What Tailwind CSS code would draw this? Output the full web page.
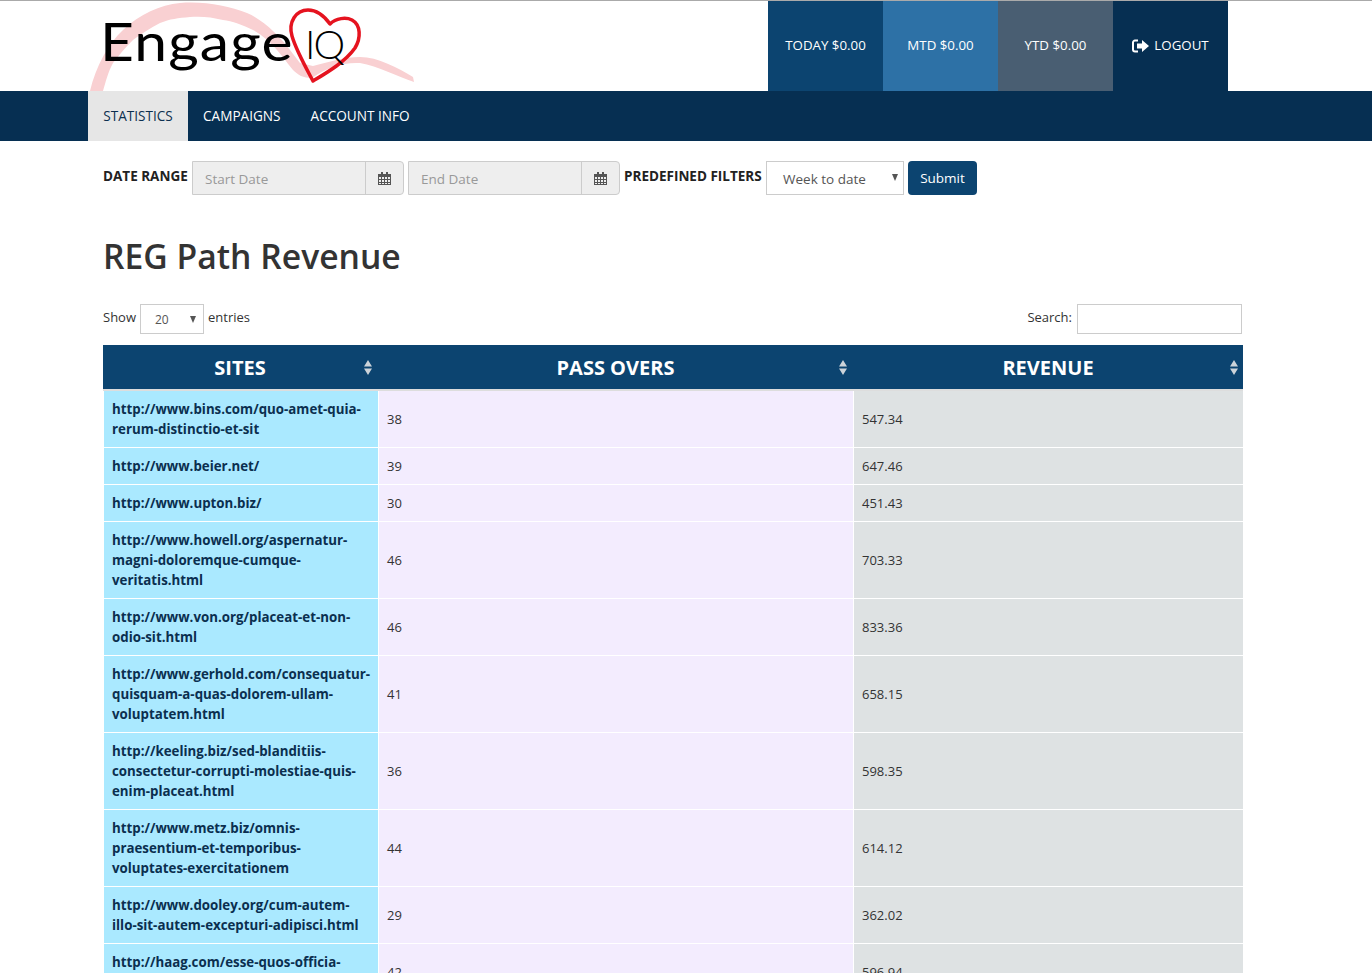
<!DOCTYPE html>
<html lang="en">
<head>
    <meta charset="UTF-8">
    <title>REG Path Revenue</title>
    <script src="https://cdn.jsdelivr.net/npm/@tailwindcss/browser@4"></script>
</head>
<body class="font-['Open_Sans',sans-serif] text-[#333] bg-white h-[973px] overflow-hidden">

    <!-- header -->
    <header class="h-[91px] border-t border-[#aaaaaa] flex pl-[88px] pr-[144px] justify-between">
        <a href="#" class="relative block w-[340px] h-[90px] overflow-hidden">
            <svg class="absolute left-0 top-0" width="340" height="90" viewBox="88 1 340 90">
                <path fill="#f9d0d2" d="M90 91 C96 66 108 44 123 30 C140 14 160 5 180 3 C205 1 228 6 247 13 C262 19 280 36 290 50 L300 63 L313 66 C328 62 345 57 360 57 C378 57 398 68 413 77 L414 82 C398 77 378 66 360 63 C343 62 326 68 312 78 C303 78 298 75 293 70 C288 64 284 58 277 50 C270 42 262 35 253 30 C243 25 232 21 223 20 C212 17 200 16 190 17 C178 18 170 19 160 23 C150 28 141 34 133 40 C125 48 119 55 113 63 C108 72 106 81 103 91 Z"/>
                <path fill="none" d="M313 81 C305 66 296 50 292 36 C288 22 296 10 308 10 C318 10 325 17 330 24 C336 18 346 17 352 20 C361 25 361 38 355 48 C345 62 328 72 313 81 Z" stroke="#e5131f" stroke-width="3.500" stroke-linejoin="round"/>
            </svg>
            <span class="absolute left-[12px] top-[6px] origin-left scale-x-[1.130] font-['Lato',sans-serif] text-[52px] leading-[68px] text-black tracking-[1px]">Engage</span>
            <span class="absolute left-[217px] top-[15px] font-['Lato',sans-serif] font-light text-[40px] leading-[56px] text-black tracking-[-2px]">IQ</span>
        </a>
        <div class="flex text-white text-[13.300px]">
            <a href="#" class="w-[115px] bg-[#0c4470] flex items-center justify-center">TODAY $0.00</a>
            <a href="#" class="w-[115px] bg-[#2d71a6] flex items-center justify-center">MTD $0.00</a>
            <a href="#" class="w-[115px] bg-[#495e72] flex items-center justify-center">YTD $0.00</a>
            <a href="#" class="w-[115px] bg-[#062f52] flex items-center justify-center gap-1">
                <svg width="18" height="14" viewBox="0 0 18 14" fill="none">
                    <path d="M6 1.500H3a2 2 0 0 0-2 2v7a2 2 0 0 0 2 2h3" stroke="#fff" stroke-width="2"/>
                    <path d="M5 4.500h5V1l7 6-7 6V9.500H5z" fill="#fff"/>
                </svg>
                LOGOUT
            </a>
        </div>
    </header>

    <!-- nav -->
    <nav class="h-[50px] bg-[#062f52] flex pl-[88px] text-[13.600px] text-white">
        <a href="#" class="w-[100px] flex items-center justify-center bg-[#e6e6e6] text-[#0b2f4f]">STATISTICS</a>
        <a href="#" class="px-[15px] flex items-center">CAMPAIGNS</a>
        <a href="#" class="px-[15px] flex items-center">ACCOUNT INFO</a>
    </nav>

    <main class="pl-[103px] pr-[129px]">
        <!-- filters -->
        <form class="flex mt-[20px] h-[34px] gap-1 text-[13.500px]">
            <label class="w-[85px] whitespace-nowrap font-bold text-[#222] leading-[30px]">DATE RANGE</label>
            <div class="w-[212px] flex border border-[#cccccc] rounded-r bg-[#eeeeee]">
                <span class="flex-1 px-3 text-[#999] leading-[34px]">Start Date</span>
                <span class="w-[38px] border-l border-[#cccccc] flex items-center justify-center">
                    <svg width="13" height="14" viewBox="0 0 13 14" fill="#555"><path d="M0 3h13v11H0zM1 6v2h2V6zm3 0v2h2V6zm3 0v2h2V6zm3 0v2h2V6zM1 9v2h2V9zm3 0v2h2V9zm3 0v2h2V9zm3 0v2h2V9zm-9 3v1h2v-1zm3 0v1h2v-1zm3 0v1h2v-1zm3 0v1h2v-1z" fill-rule="evenodd"/><path d="M3 1h2v3H3zM8 1h2v3H8z"/></svg>
                </span>
            </div>
            <div class="w-[212px] flex border border-[#cccccc] rounded-r bg-[#eeeeee]">
                <span class="flex-1 px-3 text-[#999] leading-[34px]">End Date</span>
                <span class="w-[38px] border-l border-[#cccccc] flex items-center justify-center">
                    <svg width="13" height="14" viewBox="0 0 13 14" fill="#555"><path d="M0 3h13v11H0zM1 6v2h2V6zm3 0v2h2V6zm3 0v2h2V6zm3 0v2h2V6zM1 9v2h2V9zm3 0v2h2V9zm3 0v2h2V9zm3 0v2h2V9zm-9 3v1h2v-1zm3 0v1h2v-1zm3 0v1h2v-1zm3 0v1h2v-1z" fill-rule="evenodd"/><path d="M3 1h2v3H3zM8 1h2v3H8z"/></svg>
                </span>
            </div>
            <label class="w-[138px] whitespace-nowrap font-bold text-[#222] leading-[30px]">PREDEFINED FILTERS</label>
            <div class="relative w-[138px] border border-[#cccccc] pl-4 text-[#555] leading-[34px]">
                Week to date
                <span class="absolute right-[5px] top-[12px] w-0 h-0 border-x-[3.500px] border-x-transparent border-t-[7px] border-t-[#555]"></span>
            </div>
            <button type="button" class="w-[69px] bg-[#0c4470] text-white rounded">Submit</button>
        </form>

        <h1 class="mt-[37px] text-[33.700px] leading-[48px] font-semibold">REG Path Revenue</h1>

        <!-- table controls -->
        <div class="flex justify-between mt-[24px] h-[30px] text-[13px] pr-px">
            <div class="flex gap-1 leading-[26px]">
                <span>Show</span>
                <div class="relative w-[64px] border border-[#cccccc] pl-[14px] text-xs leading-[30px] text-[#555]">
                    20
                    <span class="absolute right-[7px] top-[11px] w-0 h-0 border-x-[3.500px] border-x-transparent border-t-[7px] border-t-[#555]"></span>
                </div>
                <span>entries</span>
            </div>
            <div class="flex gap-[5px] leading-[26px]">
                <span>Search:</span>
                <div class="w-[165px] border border-[#cccccc]"></div>
            </div>
        </div>

        <!-- table -->
        <table class="mt-[11px] w-[1140px] table-fixed border-separate border-spacing-0 text-[13px] leading-[20px]">
            <colgroup>
                <col class="w-[276px]">
                <col class="w-[475px]">
                <col class="w-[389px]">
            </colgroup>
            <thead class="bg-[#0c4470] text-white text-[20px] font-bold">
                <tr class="h-[46px]">
                    <th class="relative border-b-2 border-[#dddddd] pt-px pr-[2px]">SITES
                        <svg class="absolute right-[7px] top-[15px]" width="8" height="15" viewBox="0 0 8 15" fill="#ccd3d9"><path d="M4 0l4 6.500H0zM4 15l-4-6.500h8z"/></svg>
                    </th>
                    <th class="relative border-b-2 border-[#dddddd] pt-px pr-[2px]">PASS OVERS
                        <svg class="absolute right-[7px] top-[15px]" width="8" height="15" viewBox="0 0 8 15" fill="#ccd3d9"><path d="M4 0l4 6.500H0zM4 15l-4-6.500h8z"/></svg>
                    </th>
                    <th class="relative border-b-2 border-[#dddddd] pt-px pr-px">REVENUE
                        <svg class="absolute right-[5px] top-[15px]" width="8" height="15" viewBox="0 0 8 15" fill="#ccd3d9"><path d="M4 0l4 6.500H0zM4 15l-4-6.500h8z"/></svg>
                    </th>
                </tr>
            </thead>
            <tbody>
                <tr><td class="bg-[#aae9ff] border-x border-b border-white p-2 text-[13.300px] font-bold text-[#0b2f4f]">http://www.bins.com/quo-amet-quia-rerum-distinctio-et-sit</td><td class="bg-[#f3ecfe] border-r border-b border-white p-2">38</td><td class="bg-[#dee2e3] border-b border-white p-2">547.34</td></tr>
                <tr><td class="bg-[#aae9ff] border-x border-b border-white p-2 text-[13.300px] font-bold text-[#0b2f4f]">http://www.beier.net/</td><td class="bg-[#f3ecfe] border-r border-b border-white p-2">39</td><td class="bg-[#dee2e3] border-b border-white p-2">647.46</td></tr>
                <tr><td class="bg-[#aae9ff] border-x border-b border-white p-2 text-[13.300px] font-bold text-[#0b2f4f]">http://www.upton.biz/</td><td class="bg-[#f3ecfe] border-r border-b border-white p-2">30</td><td class="bg-[#dee2e3] border-b border-white p-2">451.43</td></tr>
                <tr><td class="bg-[#aae9ff] border-x border-b border-white p-2 text-[13.300px] font-bold text-[#0b2f4f]">http://www.howell.org/aspernatur-magni-doloremque-cumque-veritatis.html</td><td class="bg-[#f3ecfe] border-r border-b border-white p-2">46</td><td class="bg-[#dee2e3] border-b border-white p-2">703.33</td></tr>
                <tr><td class="bg-[#aae9ff] border-x border-b border-white p-2 text-[13.300px] font-bold text-[#0b2f4f]">http://www.von.org/placeat-et-non-odio-sit.html</td><td class="bg-[#f3ecfe] border-r border-b border-white p-2">46</td><td class="bg-[#dee2e3] border-b border-white p-2">833.36</td></tr>
                <tr><td class="bg-[#aae9ff] border-x border-b border-white p-2 text-[13.300px] font-bold text-[#0b2f4f]">http://www.gerhold.com/consequatur-quisquam-a-quas-dolorem-ullam-voluptatem.html</td><td class="bg-[#f3ecfe] border-r border-b border-white p-2">41</td><td class="bg-[#dee2e3] border-b border-white p-2">658.15</td></tr>
                <tr><td class="bg-[#aae9ff] border-x border-b border-white p-2 text-[13.300px] font-bold text-[#0b2f4f]">http://keeling.biz/sed-blanditiis-consectetur-corrupti-molestiae-quis-enim-placeat.html</td><td class="bg-[#f3ecfe] border-r border-b border-white p-2">36</td><td class="bg-[#dee2e3] border-b border-white p-2">598.35</td></tr>
                <tr><td class="bg-[#aae9ff] border-x border-b border-white p-2 text-[13.300px] font-bold text-[#0b2f4f]">http://www.metz.biz/omnis-praesentium-et-temporibus-voluptates-exercitationem</td><td class="bg-[#f3ecfe] border-r border-b border-white p-2">44</td><td class="bg-[#dee2e3] border-b border-white p-2">614.12</td></tr>
                <tr><td class="bg-[#aae9ff] border-x border-b border-white p-2 text-[13.300px] font-bold text-[#0b2f4f]">http://www.dooley.org/cum-autem-illo-sit-autem-excepturi-adipisci.html</td><td class="bg-[#f3ecfe] border-r border-b border-white p-2">29</td><td class="bg-[#dee2e3] border-b border-white p-2">362.02</td></tr>
                <tr><td class="bg-[#aae9ff] border-x border-b border-white p-2 text-[13.300px] font-bold text-[#0b2f4f]">http://haag.com/esse-quos-officia-vel.html</td><td class="bg-[#f3ecfe] border-r border-b border-white p-2">42</td><td class="bg-[#dee2e3] border-b border-white p-2">596.94</td></tr>
            </tbody>
        </table>
    </main>

</body>
</html>
